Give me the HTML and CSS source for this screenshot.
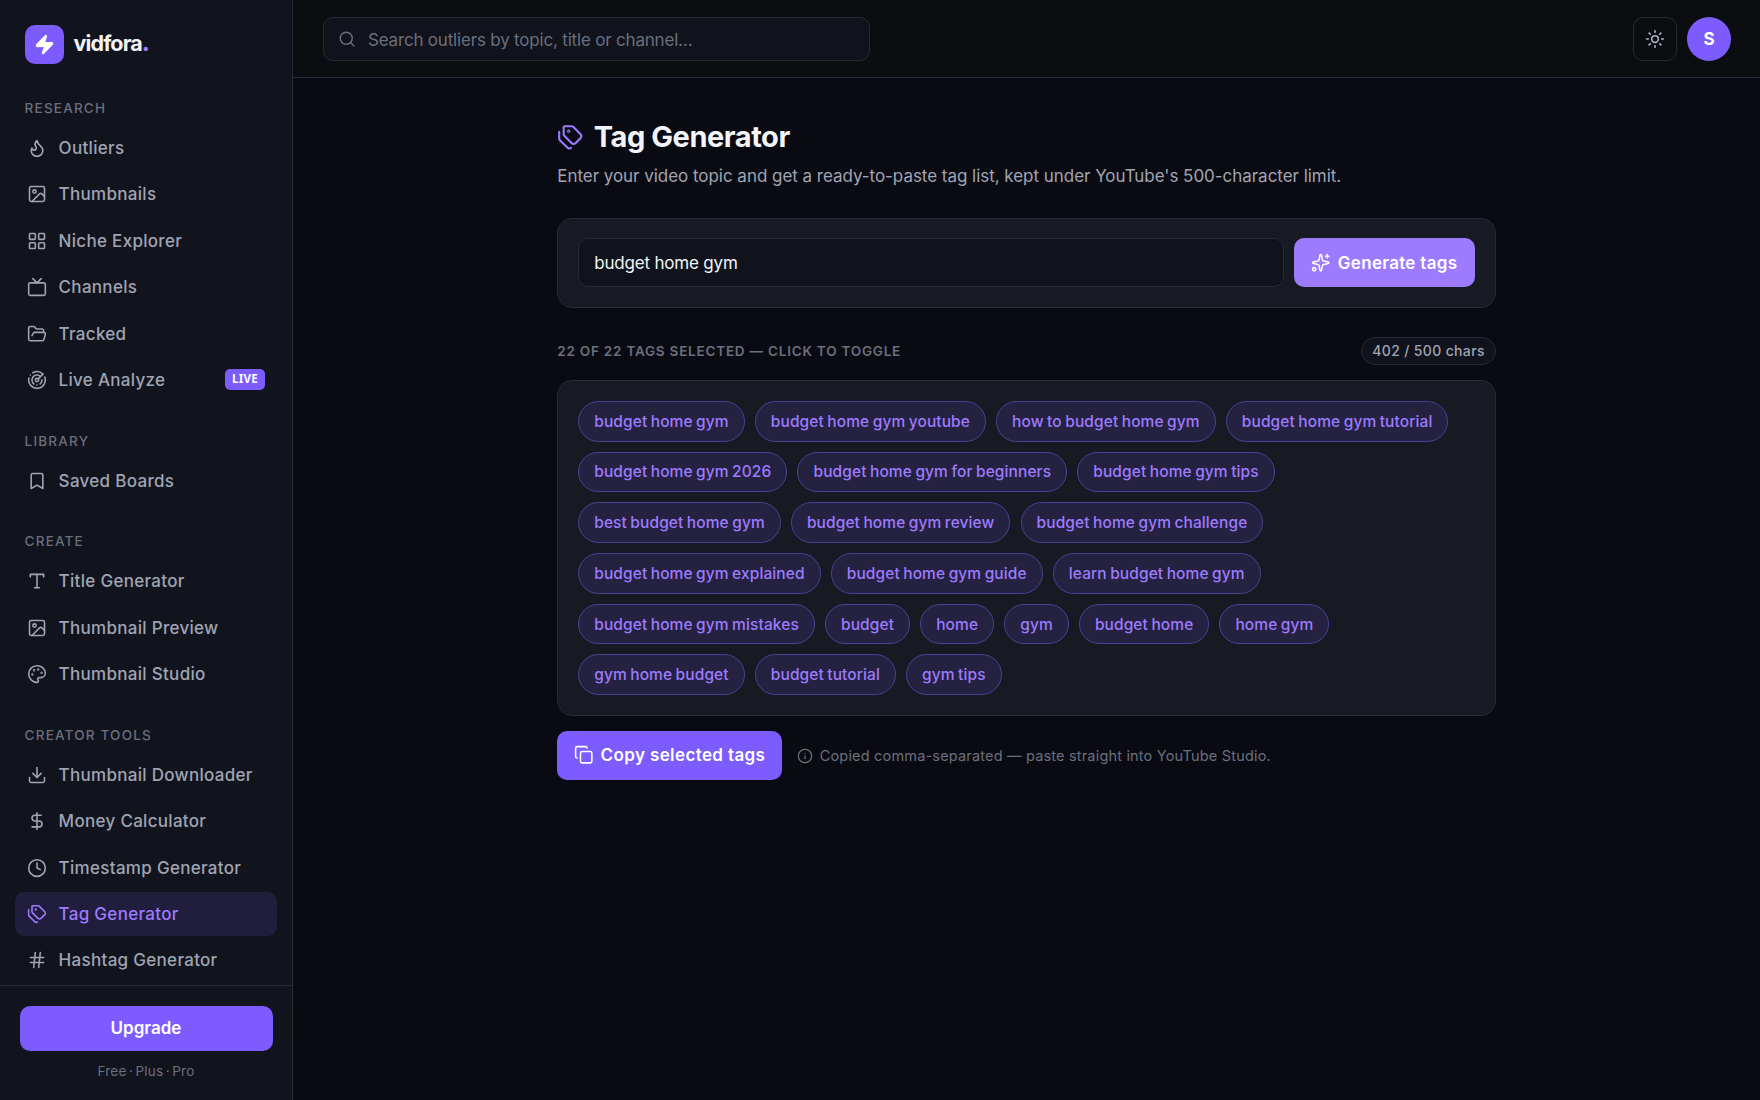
FILE: index.html
```html
<!DOCTYPE html>
<html lang="en">
<head>
  <meta charset="UTF-8" />
  <meta name="viewport" content="width=device-width, initial-scale=1.0"/>
  <title>Tag Generator - vidfora</title>
  <link rel="stylesheet" href="styles.css">
</head>
<body>
  <aside class="sidebar">
    <a class="brand">
      <span class="brand-mark">
        <svg viewBox="0 0 24 24"><path d="M4 14a1 1 0 0 1-.78-1.63l9.9-10.2a.5.5 0 0 1 .86.46l-1.92 6.02A1 1 0 0 0 13 10h7a1 1 0 0 1 .78 1.63l-9.9 10.2a.5.5 0 0 1-.86-.46l1.92-6.02A1 1 0 0 0 11 14z"/></svg>
      </span>
      <span class="brand-name">vidfora<b>.</b></span>
    </a>

    <nav class="nav">
      <div class="nav-label">RESEARCH</div>
      <a class="nav-item">
        <svg class="icon" viewBox="0 0 24 24"><path d="M8.5 14.5A2.5 2.5 0 0 0 11 12c0-1.38-.5-2-1-3-1.072-2.143-.224-4.054 2-6 .5 2.5 2 4.9 4 6.5 2 1.6 3 3.5 3 5.5a7 7 0 1 1-14 0c0-1.153.433-2.294 1-3a2.5 2.5 0 0 0 2.5 2.5z"/></svg>
        <span>Outliers</span>
      </a>
      <a class="nav-item">
        <svg class="icon" viewBox="0 0 24 24"><rect x="3" y="3" width="18" height="18" rx="2"/><circle cx="9" cy="9" r="2"/><path d="m21 15-3.086-3.086a2 2 0 0 0-2.828 0L6 21"/></svg>
        <span>Thumbnails</span>
      </a>
      <a class="nav-item">
        <svg class="icon" viewBox="0 0 24 24"><rect x="3" y="3" width="7" height="7" rx="1"/><rect x="14" y="3" width="7" height="7" rx="1"/><rect x="14" y="14" width="7" height="7" rx="1"/><rect x="3" y="14" width="7" height="7" rx="1"/></svg>
        <span>Niche Explorer</span>
      </a>
      <a class="nav-item">
        <svg class="icon" viewBox="0 0 24 24"><path d="m17 2-5 5-5-5"/><rect x="2" y="7" width="20" height="15" rx="2"/></svg>
        <span>Channels</span>
      </a>
      <a class="nav-item">
        <svg class="icon" viewBox="0 0 24 24"><path d="m6 14 1.5-2.9A2 2 0 0 1 9.24 10H20a2 2 0 0 1 1.94 2.5l-1.54 6a2 2 0 0 1-1.95 1.5H4a2 2 0 0 1-2-2V5a2 2 0 0 1 2-2h3.9a2 2 0 0 1 1.69.9l.81 1.2a2 2 0 0 0 1.67.9H18a2 2 0 0 1 2 2v2"/></svg>
        <span>Tracked</span>
      </a>
      <a class="nav-item">
        <svg class="icon" viewBox="0 0 24 24"><path d="M19.07 4.93A10 10 0 0 0 6.99 3.34"/><path d="M4 6h.01"/><path d="M2.29 9.62A10 10 0 1 0 21.31 8.35"/><path d="M16.24 7.76A6 6 0 1 0 8.23 16.67"/><path d="M12 18h.01"/><path d="M17.99 11.66A6 6 0 0 1 15.77 16.67"/><circle cx="12" cy="12" r="2"/><path d="m13.41 10.59 5.66-5.66"/></svg>
        <span>Live Analyze</span>
        <span class="badge">LIVE</span>
      </a>

      <div class="nav-label">LIBRARY</div>
      <a class="nav-item">
        <svg class="icon" viewBox="0 0 24 24"><path d="m19 21-7-4-7 4V5a2 2 0 0 1 2-2h10a2 2 0 0 1 2 2v16z"/></svg>
        <span>Saved Boards</span>
      </a>

      <div class="nav-label">CREATE</div>
      <a class="nav-item">
        <svg class="icon" viewBox="0 0 24 24"><path d="M4 7V4h16v3"/><path d="M9 20h6"/><path d="M12 4v16"/></svg>
        <span>Title Generator</span>
      </a>
      <a class="nav-item">
        <svg class="icon" viewBox="0 0 24 24"><rect x="3" y="3" width="18" height="18" rx="2"/><circle cx="9" cy="9" r="2"/><path d="m21 15-3.086-3.086a2 2 0 0 0-2.828 0L6 21"/></svg>
        <span>Thumbnail Preview</span>
      </a>
      <a class="nav-item">
        <svg class="icon" viewBox="0 0 24 24"><circle cx="13.5" cy="6.5" r=".5"/><circle cx="17.5" cy="10.5" r=".5"/><circle cx="8.5" cy="7.5" r=".5"/><circle cx="6.5" cy="12.5" r=".5"/><path d="M12 2C6.5 2 2 6.5 2 12s4.5 10 10 10c.926 0 1.648-.746 1.648-1.688 0-.437-.18-.835-.437-1.125-.29-.289-.438-.652-.438-1.125a1.64 1.64 0 0 1 1.668-1.668h1.996c3.051 0 5.555-2.503 5.555-5.554C21.965 6.012 17.461 2 12 2z"/></svg>
        <span>Thumbnail Studio</span>
      </a>

      <div class="nav-label">CREATOR TOOLS</div>
      <a class="nav-item">
        <svg class="icon" viewBox="0 0 24 24"><path d="M21 15v4a2 2 0 0 1-2 2H5a2 2 0 0 1-2-2v-4"/><path d="m7 10 5 5 5-5"/><path d="M12 15V3"/></svg>
        <span>Thumbnail Downloader</span>
      </a>
      <a class="nav-item">
        <svg class="icon" viewBox="0 0 24 24"><path d="M12 2v20"/><path d="M17 5H9.5a3.5 3.5 0 0 0 0 7h5a3.5 3.5 0 0 1 0 7H6"/></svg>
        <span>Money Calculator</span>
      </a>
      <a class="nav-item">
        <svg class="icon" viewBox="0 0 24 24"><circle cx="12" cy="12" r="10"/><path d="M12 6v6l4 2"/></svg>
        <span>Timestamp Generator</span>
      </a>
      <a class="nav-item active">
        <svg class="icon" viewBox="0 0 24 24"><path d="M13.172 2a2 2 0 0 1 1.414.586l6.71 6.71a2.4 2.4 0 0 1 0 3.408l-4.592 4.592a2.4 2.4 0 0 1-3.408 0l-6.71-6.71A2 2 0 0 1 6 9.172V3a1 1 0 0 1 1-1z"/><path d="M2 7v6.172a2 2 0 0 0 .586 1.414l6.71 6.71a2.4 2.4 0 0 0 3.191.193"/><circle cx="10.5" cy="6.5" r=".5"/></svg>
        <span>Tag Generator</span>
      </a>
      <a class="nav-item">
        <svg class="icon" viewBox="0 0 24 24"><path d="M4 9h16"/><path d="M4 15h16"/><path d="M10 3 8 21"/><path d="m16 3-2 18"/></svg>
        <span>Hashtag Generator</span>
      </a>
    </nav>

    <div class="sidebar-footer">
      <button class="upgrade">Upgrade</button>
      <p class="plans">Free · Plus · Pro</p>
    </div>
  </aside>

  <div class="page">
    <header class="topbar">
      <label class="search">
        <svg class="icon" viewBox="0 0 24 24"><circle cx="11" cy="11" r="8"/><path d="m21 21-4.3-4.3"/></svg>
        <input type="text" placeholder="Search outliers by topic, title or channel…">
      </label>
      <div class="topbar-actions">
        <button class="theme-toggle">
          <svg class="icon" viewBox="0 0 24 24"><circle cx="12" cy="12" r="4"/><path d="M12 2v2"/><path d="M12 20v2"/><path d="m4.93 4.93 1.41 1.41"/><path d="m17.66 17.66 1.41 1.41"/><path d="M2 12h2"/><path d="M20 12h2"/><path d="m6.34 17.66-1.41 1.41"/><path d="m19.07 4.93-1.41 1.41"/></svg>
        </button>
        <div class="avatar">S</div>
      </div>
    </header>

    <main class="content">
      <h1 class="title">
        <svg class="icon" viewBox="0 0 24 24"><path d="M13.172 2a2 2 0 0 1 1.414.586l6.71 6.71a2.4 2.4 0 0 1 0 3.408l-4.592 4.592a2.4 2.4 0 0 1-3.408 0l-6.71-6.71A2 2 0 0 1 6 9.172V3a1 1 0 0 1 1-1z"/><path d="M2 7v6.172a2 2 0 0 0 .586 1.414l6.71 6.71a2.4 2.4 0 0 0 3.191.193"/><circle cx="10.5" cy="6.5" r=".5"/></svg>
        <span>Tag Generator</span>
      </h1>
      <p class="subtitle">Enter your video topic and get a ready-to-paste tag list, kept under YouTube's 500-character limit.</p>

      <form class="card generate-form">
        <input class="topic-input" type="text" value="budget home gym">
        <button class="btn btn-generate" type="button">
          <svg class="icon" viewBox="0 0 24 24"><path d="M11.017 2.814a1 1 0 0 1 1.966 0l1.051 5.558a2 2 0 0 0 1.594 1.594l5.558 1.051a1 1 0 0 1 0 1.966l-5.558 1.051a2 2 0 0 0-1.594 1.594l-1.051 5.558a1 1 0 0 1-1.966 0l-1.051-5.558a2 2 0 0 0-1.594-1.594l-5.558-1.051a1 1 0 0 1 0-1.966l5.558-1.051a2 2 0 0 0 1.594-1.594z"/><path d="M20 2v4"/><path d="M22 4h-4"/><circle cx="4" cy="20" r="2"/></svg>
          <span>Generate tags</span>
        </button>
      </form>

      <div class="tags-head">
        <span class="tags-count">22 OF 22 TAGS SELECTED — CLICK TO TOGGLE</span>
        <span class="char-count">402 / 500 chars</span>
      </div>

      <div class="card tags">
        <button class="tag">budget home gym</button>
        <button class="tag">budget home gym youtube</button>
        <button class="tag">how to budget home gym</button>
        <button class="tag">budget home gym tutorial</button>
        <button class="tag">budget home gym 2026</button>
        <button class="tag">budget home gym for beginners</button>
        <button class="tag">budget home gym tips</button>
        <button class="tag">best budget home gym</button>
        <button class="tag">budget home gym review</button>
        <button class="tag">budget home gym challenge</button>
        <button class="tag">budget home gym explained</button>
        <button class="tag">budget home gym guide</button>
        <button class="tag">learn budget home gym</button>
        <button class="tag">budget home gym mistakes</button>
        <button class="tag">budget</button>
        <button class="tag">home</button>
        <button class="tag">gym</button>
        <button class="tag">budget home</button>
        <button class="tag">home gym</button>
        <button class="tag">gym home budget</button>
        <button class="tag">budget tutorial</button>
        <button class="tag">gym tips</button>
      </div>

      <div class="copy-row">
        <button class="btn btn-copy">
          <svg class="icon" viewBox="0 0 24 24"><rect x="8" y="8" width="14" height="14" rx="2"/><path d="M4 16c-1.1 0-2-.9-2-2V4c0-1.1.9-2 2-2h10c1.1 0 2 .9 2 2"/></svg>
          <span>Copy selected tags</span>
        </button>
        <p class="hint">
          <svg class="icon" viewBox="0 0 24 24"><circle cx="12" cy="12" r="10"/><path d="M12 16v-4"/><path d="M12 8h.01"/></svg>
          <span>Copied comma-separated — paste straight into YouTube Studio.</span>
        </p>
      </div>
    </main>
  </div>
</body>
</html>
```

FILE: styles.css
```css
* {
  box-sizing: border-box;
  margin: 0;
  padding: 0;
}

:root {
  --bg: #0a0b12;
  --sidebar: #11141d;
  --card: #171923;
  --field: #10131b;
  --border: #272a32;
  --text: #f3f4f8;
  --muted: #a0a4b3;
  --faint: #6b6f7d;
  --accent: #7c5cff;
  --accent-light: #9d7bff;
}

body {
  display: flex;
  height: 100vh;
  overflow: hidden;
  font-family: Inter, sans-serif;
  font-size: 17px;
  background: var(--bg);
  color: var(--text);
}

button,
input {
  font: inherit;
  color: inherit;
  letter-spacing: inherit;
  border: none;
  outline: none;
  background: none;
}

button {
  cursor: pointer;
}

.icon {
  flex: none;
  width: 20px;
  height: 20px;
  fill: none;
  stroke: currentColor;
  stroke-width: 1.9;
  stroke-linecap: round;
  stroke-linejoin: round;
}

/* Sidebar */
.sidebar {
  flex: none;
  display: flex;
  flex-direction: column;
  width: 293px;
  background: var(--sidebar);
  border-right: 1px solid var(--border);
}

.brand {
  display: flex;
  align-items: center;
  gap: 10px;
  padding: 24.6px 24.6px 0;
}

.brand-mark {
  display: flex;
  align-items: center;
  justify-content: center;
  width: 39px;
  height: 39px;
  border-radius: 10px;
  background: var(--accent);
}

.brand-mark svg {
  width: 21px;
  height: 21px;
  fill: #fff;
  stroke: #fff;
  stroke-width: 2;
  stroke-linejoin: round;
}

.brand-name {
  font-size: 21.5px;
  font-weight: 700;
  letter-spacing: -0.9px;
  line-height: 36px;
  padding-bottom: 3px;
}

.brand-name b {
  color: var(--accent-light);
}

.nav {
  flex: 1;
  display: flex;
  flex-direction: column;
  gap: 2.4px;
  min-height: 0;
  overflow: hidden;
  padding: 11.4px 15px 0 14.6px;
}

.nav-label {
  padding: 27.2px 10px 6.6px;
  font-size: 13.5px;
  font-weight: 500;
  line-height: 18px;
  letter-spacing: 1.2px;
  color: var(--faint);
}

.nav-label:first-child {
  padding-top: 23.8px;
}

.nav-item {
  flex: none;
  display: flex;
  align-items: center;
  gap: 12px;
  height: 44.05px;
  padding: 0 12px;
  border-radius: 9px;
  font-weight: 500;
  letter-spacing: 0.3px;
  color: var(--muted);
}

.nav-item.active {
  background: #211d3c;
  color: var(--accent-light);
}

.badge {
  margin-left: auto;
  padding: 0 7px 2px;
  border-radius: 5px;
  background: var(--accent);
  color: #fff;
  font-family: "Noto Sans", sans-serif;
  font-size: 11.5px;
  font-weight: 700;
  line-height: 19px;
  letter-spacing: 0.3px;
}

.sidebar-footer {
  padding: 20px 19.5px 0;
  height: 115px;
  border-top: 1px solid var(--border);
}

.upgrade {
  width: 100%;
  height: 45px;
  padding-bottom: 1px;
  border-radius: 10px;
  background: var(--accent);
  color: #fff;
  font-weight: 600;
}

.plans {
  margin-top: 11px;
  font-size: 13.5px;
  line-height: 18px;
  letter-spacing: 0.25px;
  word-spacing: -1.7px;
  text-align: center;
  color: var(--faint);
}

/* Top bar */
.page {
  flex: 1;
  min-width: 0;
}

.topbar {
  display: flex;
  align-items: center;
  justify-content: space-between;
  height: 78px;
  padding: 0 29px 0 30px;
  background: #0c0d11;
  border-bottom: 1px solid var(--border);
}

.search {
  display: flex;
  align-items: center;
  gap: 12px;
  width: 547px;
  height: 44px;
  padding: 0 14px;
  border: 1px solid var(--border);
  border-radius: 10px;
  background: var(--field);
  color: var(--faint);
}

.search .icon {
  width: 18px;
  height: 18px;
}

.search input {
  flex: 1;
  padding-top: 2px;
  letter-spacing: -0.19px;
}

.search input::placeholder {
  color: var(--faint);
}

.topbar-actions {
  display: flex;
  gap: 10px;
}

.theme-toggle {
  display: flex;
  align-items: center;
  justify-content: center;
  width: 44px;
  height: 44px;
  border: 1px solid var(--border);
  border-radius: 10px;
  color: #b3b6c1;
}

.avatar {
  width: 44px;
  height: 44px;
  border-radius: 50%;
  background: var(--accent);
  color: #fff;
  font-weight: 700;
  line-height: 44px;
  text-align: center;
}

/* Content */
.content {
  width: 938.6px;
  margin: 0 auto;
  padding-top: 39px;
}

.title {
  display: flex;
  align-items: center;
  gap: 10px;
  font-size: 29px;
  font-weight: 700;
  line-height: 40px;
  letter-spacing: -0.45px;
}

.title .icon {
  width: 26.6px;
  height: 26.6px;
  color: var(--accent-light);
}

.subtitle {
  margin-top: 6px;
  line-height: 26px;
  letter-spacing: -0.035px;
  color: var(--muted);
  white-space: nowrap;
}

.card {
  border: 1px solid var(--border);
  border-radius: 15px;
  background: var(--card);
}

.generate-form {
  display: flex;
  gap: 10px;
  margin-top: 29px;
  padding: 19px 20px 20px;
}

.topic-input {
  flex: 1;
  height: 49px;
  padding: 0 15px;
  border: 1px solid var(--border);
  border-radius: 10px;
  background: var(--field);
  letter-spacing: -0.19px;
}

.btn {
  display: flex;
  align-items: center;
  justify-content: center;
  gap: 7px;
  height: 49px;
  padding-bottom: 1px;
  border-radius: 10px;
  color: #fff;
  font-weight: 600;
  white-space: nowrap;
}

.btn .icon {
  width: 19.5px;
  height: 19.5px;
}

.btn-generate {
  width: 181px;
  padding-bottom: 0;
  background: var(--accent-light);
  letter-spacing: 0.3px;
}

.tags-head {
  display: flex;
  align-items: center;
  justify-content: space-between;
  margin-top: 29px;
}

.tags-count {
  font-size: 13.5px;
  font-weight: 600;
  letter-spacing: 0.78px;
  color: var(--faint);
}

.char-count {
  height: 28px;
  padding: 0 10px;
  border: 1px solid var(--border);
  border-radius: 14px;
  background: var(--field);
  color: var(--muted);
  font-size: 14px;
  font-weight: 500;
  line-height: 26px;
  letter-spacing: 0.34px;
}

.tags {
  display: flex;
  flex-wrap: wrap;
  gap: 10.1px;
  margin-top: 15px;
  padding: 20px;
}

.tag {
  height: 40.6px;
  padding: 0 15px;
  border: 1px solid #4d4094;
  border-radius: 21px;
  background: #252140;
  color: var(--accent-light);
  font-size: 15.5px;
  font-weight: 500;
  letter-spacing: 0.1px;
  word-spacing: -0.8px;
}

.copy-row {
  display: flex;
  align-items: center;
  gap: 14.5px;
  margin-top: 15px;
}

.btn-copy {
  width: 225px;
  background: var(--accent);
  letter-spacing: 0.38px;
}

.hint {
  display: flex;
  align-items: center;
  gap: 7px;
  font-size: 14.5px;
  letter-spacing: 0.18px;
  color: var(--faint);
}

.hint .icon {
  width: 16px;
  height: 16px;
}
```
